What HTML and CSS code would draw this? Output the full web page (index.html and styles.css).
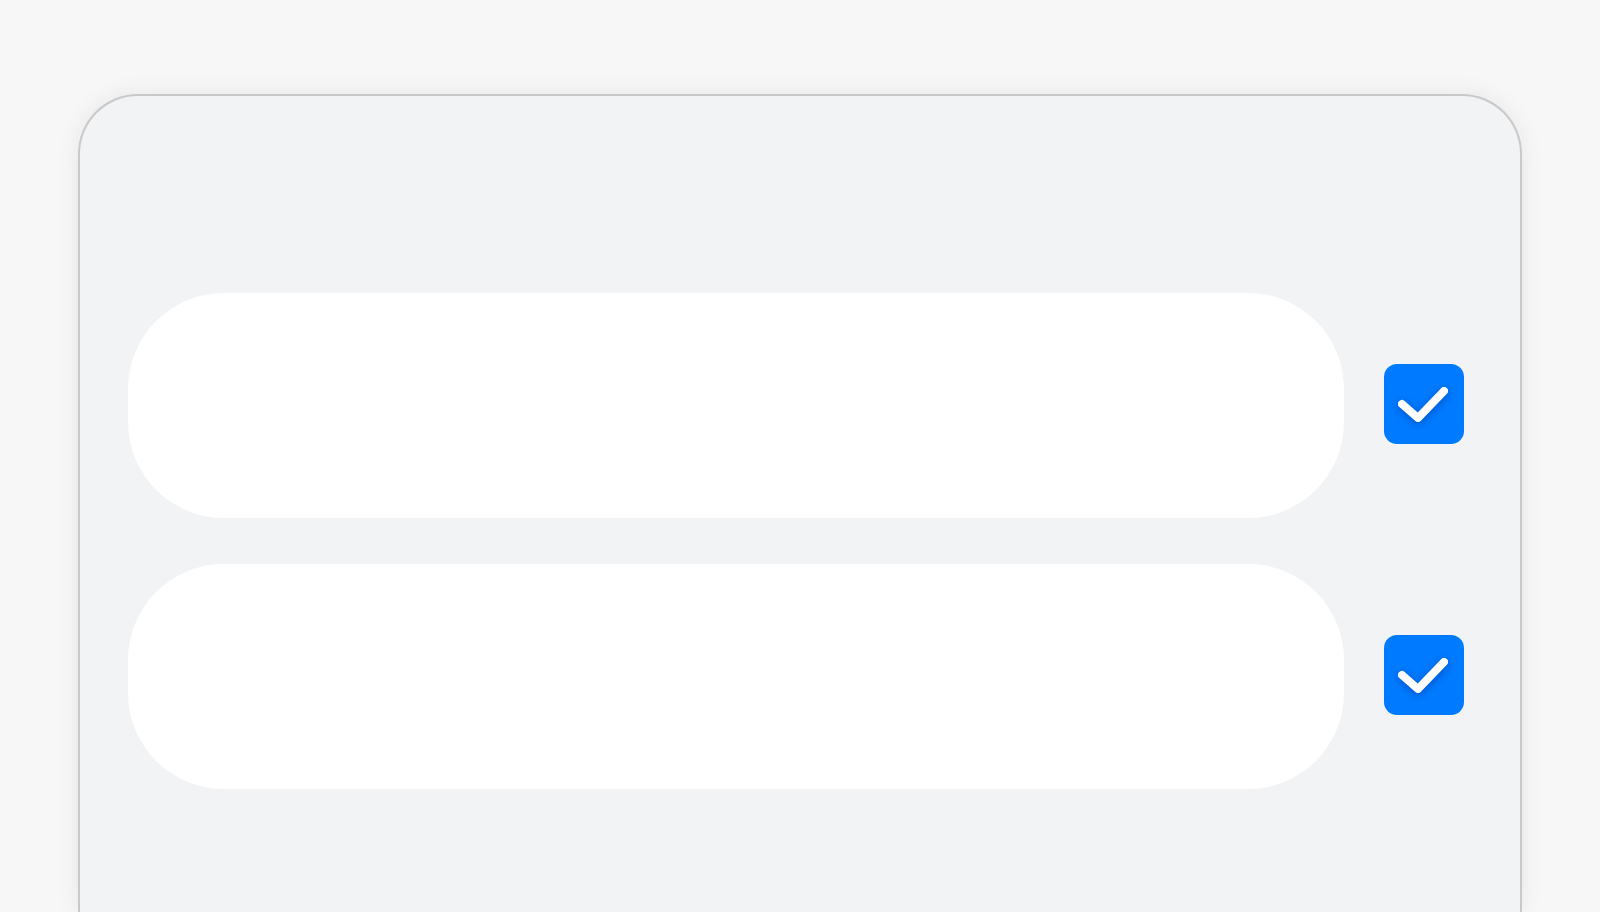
FILE: index.html
```html
<!DOCTYPE html>
<html lang="en">
<head>
<meta charset="utf-8">
<title>Checklist</title>
<link rel="stylesheet" href="styles.css">
</head>
<body>
<div class="frame">
  <div class="list">
    <div class="row">
      <div class="pill"></div>
      <div class="check">
        <svg viewBox="0 0 80 80" width="80" height="80" aria-hidden="true">
          <polyline points="18,40 34,54 60,27" fill="none" stroke="#fff" stroke-width="8" stroke-linecap="round" stroke-linejoin="round"/>
        </svg>
      </div>
    </div>
    <div class="row">
      <div class="pill"></div>
      <div class="check">
        <svg viewBox="0 0 80 80" width="80" height="80" aria-hidden="true">
          <polyline points="18,40 34,54 60,27" fill="none" stroke="#fff" stroke-width="8" stroke-linecap="round" stroke-linejoin="round"/>
        </svg>
      </div>
    </div>
  </div>
</div>
</body>
</html>
```
FILE: styles.css
```css
* { box-sizing: border-box; }
html, body { margin: 0; padding: 0; }
body {
  background: #f7f7f7;
  width: 1600px;
  height: 912px;
  overflow: hidden;
  padding: 94px 78px 0 78px;
  font-family: "Liberation Sans", Arial, sans-serif;
}
.frame {
  width: 1444px;
  height: 818px;
  background: #f2f3f5;
  border: 2px solid #c9c9c9;
  border-bottom: none;
  border-radius: 60px 60px 0 0;
  box-shadow: 0 0 24px rgba(0, 0, 0, 0.07);
  padding: 197px 56px 0 48px;
}
.list {
  display: flex;
  flex-direction: column;
  gap: 46px;
}
.row {
  display: flex;
  align-items: center;
  gap: 40px;
}
.pill {
  flex: 1;
  height: 225px;
  background: #ffffff;
  border-radius: 96px;
}
.check {
  width: 80px;
  height: 80px;
  flex: none;
  margin-bottom: 4px;
  background: #007bff;
  border-radius: 13px;
  display: flex;
}
.check svg {
  display: block;
  filter: drop-shadow(0 2px 4px rgba(0, 40, 150, 0.5));
}
```
